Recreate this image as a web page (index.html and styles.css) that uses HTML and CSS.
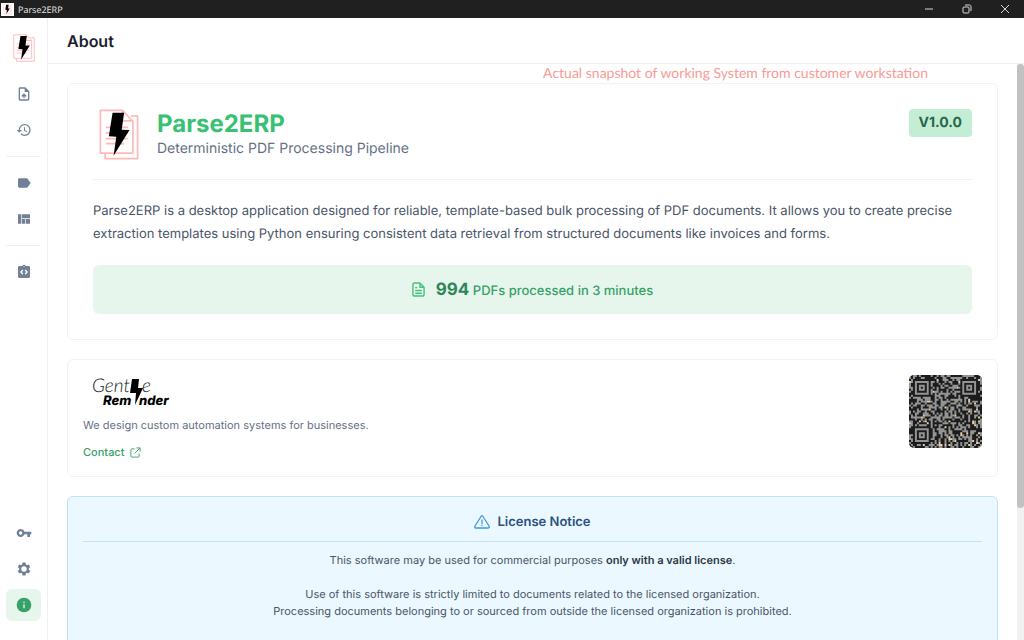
FILE: index.html
```html
<!DOCTYPE html>
<html lang="en">
<head>
    <meta charset="UTF-8">
    <meta name="viewport" content="width=device-width, initial-scale=1.0">
    <title>Parse2ERP</title>
    <link rel="stylesheet" href="styles.css">
</head>
<body>
    <!-- Shared logo artwork -->
    <svg class="sprite" aria-hidden="true">
        <symbol id="logo" viewBox="58 58 118 150">
            <g fill="none" stroke="#ffb9b9" stroke-width="5" stroke-linejoin="round" stroke-linecap="round">
                <path d="M76 190v14h96V78h-18"/>
                <path d="M127 62H62v126h96V94zM127 62v31h31"/>
                <path d="M80 112h62M80 128h62M80 145h62M80 160h50"/>
            </g>
            <path d="M98 69h34l-7 50 23 1-47 76 8-56-22-2z" fill="#000"/>
        </symbol>
    </svg>

    <header class="titlebar">
        <span class="titlebar-icon"><svg><use href="#logo"/></svg></span>
        <span class="titlebar-name">Parse2ERP</span>
        <div class="window-controls">
            <button type="button" aria-label="Minimize">
                <svg viewBox="0 0 10 10"><path d="M1 5h8"/></svg>
            </button>
            <button type="button" aria-label="Restore">
                <svg viewBox="0 0 10 10"><rect x="1" y="3" width="6" height="6" rx="1"/><path d="M3 1h4.500q1.500 0 1.500 1.500V7"/></svg>
            </button>
            <button type="button" aria-label="Close">
                <svg viewBox="0 0 10 10"><path d="M1 1l8 8M9 1l-8 8"/></svg>
            </button>
        </div>
    </header>

    <div class="app">
        <nav class="sidebar">
            <svg class="sidebar-logo"><use href="#logo"/></svg>
            <button type="button" class="nav-btn" aria-label="Upload file">
                <svg viewBox="0 0 24 24"><path d="M14 2H6c-1.100 0-1.990.9-1.990 2L4 20c0 1.100.89 2 1.990 2H18c1.100 0 2-.9 2-2V8l-6-6zm4 18H6V4h7v5h5v11zM8 15l1.400 1.400 1.600-1.600V18h2v-3.200l1.600 1.600L16 15l-4-4z"/></svg>
            </button>
            <button type="button" class="nav-btn" aria-label="History">
                <svg viewBox="0 0 24 24"><path d="M13 3a9 9 0 0 0-9 9H1l3.890 3.890.07.14L9 12H6c0-3.870 3.130-7 7-7s7 3.130 7 7-3.130 7-7 7c-1.930 0-3.680-.79-4.940-2.060l-1.420 1.420A8.950 8.950 0 0 0 13 21a9 9 0 0 0 0-18zm-1 5v5l4.280 2.540.72-1.210-3.500-2.080V8H12z"/></svg>
            </button>
            <hr>
            <button type="button" class="nav-btn" aria-label="Labels">
                <svg viewBox="0 0 24 24"><path d="M17.630 5.840C17.270 5.330 16.670 5 16 5H5C3.900 5 3 5.900 3 7v10c0 1.100.9 2 2 2h11c.67 0 1.270-.33 1.630-.84L22 12z"/></svg>
            </button>
            <button type="button" class="nav-btn" aria-label="Templates">
                <svg viewBox="0 0 24 24"><path d="M3 5h5v14H3zM9 5h12v6H9zM9 12h5v7H9zM15 12h6v7h-6z"/></svg>
            </button>
            <hr>
            <button type="button" class="nav-btn" aria-label="Scripts">
                <svg viewBox="0 0 24 24"><path fill-rule="evenodd" d="M19 3h-4.180a3 3 0 0 0-5.640 0H5a2 2 0 0 0-2 2v14a2 2 0 0 0 2 2h14a2 2 0 0 0 2-2V5a2 2 0 0 0-2-2zM11 14.200l-1.400 1.400L6 12l3.600-3.600L11 9.800 8.800 12zM12 4.300a.8.8 0 1 1 0-1.600.8.8 0 0 1 0 1.600zm2.400 11.300L13 14.200l2.200-2.200L13 9.800l1.400-1.400L18 12z"/></svg>
            </button>
            <div class="nav-bottom">
                <button type="button" class="nav-btn" aria-label="License key">
                    <svg viewBox="0 0 24 24"><path d="M12.650 10C11.830 7.670 9.610 6 7 6c-3.310 0-6 2.690-6 6s2.690 6 6 6c2.610 0 4.830-1.670 5.650-4H17v4h4v-4h2v-4H12.650zM7 14.500a2.500 2.500 0 1 1 0-5 2.500 2.500 0 0 1 0 5z"/></svg>
                </button>
                <button type="button" class="nav-btn" aria-label="Settings">
                    <svg viewBox="0 0 24 24"><path fill-rule="evenodd" d="M19.140 12.940c.04-.3.06-.61.06-.94 0-.32-.02-.64-.07-.94l2.030-1.580c.18-.14.23-.41.12-.61l-1.920-3.320c-.12-.22-.37-.29-.59-.22l-2.390.96c-.5-.38-1.030-.7-1.620-.94l-.36-2.540c-.04-.24-.24-.41-.48-.41h-3.840c-.24 0-.43.17-.47.41l-.36 2.540c-.59.24-1.130.57-1.620.94l-2.390-.96c-.22-.08-.47 0-.59.22L2.740 8.870c-.12.21-.08.47.12.61l2.030 1.580c-.05.3-.09.63-.09.94s.02.64.07.94l-2.030 1.580c-.18.14-.23.41-.12.61l1.920 3.320c.12.22.37.29.59.22l2.390-.96c.5.38 1.030.7 1.620.94l.36 2.540c.05.24.24.41.48.41h3.840c.24 0 .44-.17.47-.41l.36-2.540c.59-.24 1.130-.56 1.620-.94l2.390.96c.22.08.47 0 .59-.22l1.920-3.320c.12-.22.07-.47-.12-.61zM12 16a4 4 0 1 1 0-8 4 4 0 0 1 0 8z"/></svg>
                </button>
                <button type="button" class="nav-btn active" aria-label="About">
                    <svg viewBox="0 0 24 24"><path d="M12 1a11 11 0 1 0 0 22 11 11 0 0 0 0-22zm1 16h-2v-6h2zm0-8h-2V7h2z"/></svg>
                </button>
            </div>
        </nav>

        <div class="page">
            <div class="page-header">
                <h1>About</h1>
                <span class="snapshot-note">Actual snapshot of working System from customer workstation</span>
            </div>

            <div class="scroll-area">
                <main class="content">
                    <section class="card about-card">
                        <div class="about-header">
                            <svg class="about-logo"><use href="#logo"/></svg>
                            <div class="about-title">
                                <h2>Parse2ERP</h2>
                                <p>Deterministic PDF Processing Pipeline</p>
                            </div>
                            <span class="version">V1.0.0</span>
                        </div>
                        <p class="about-text">Parse2ERP is a desktop application designed for reliable, template-based bulk processing of PDF documents. It allows you to create precise extraction templates using Python ensuring consistent data retrieval from structured documents like invoices and forms.</p>
                        <div class="stats">
                            <svg viewBox="0 0 14 16" fill="none" stroke="currentColor" stroke-width="1.500" stroke-linejoin="round" stroke-linecap="round"><path d="M8.500 1H3Q1 1 1 3v10q0 2 2 2h8q2 0 2-2V5.500L8.500 1v4.500H13M4 6h1M4 9h6M4 12h6"/></svg>
                            <p><strong>994</strong> PDFs processed in 3 minutes</p>
                        </div>
                    </section>

                    <section class="card company-card">
                        <div>
                            <svg class="company-logo" viewBox="0 0 90 36" role="img" aria-label="Gentle Reminder">
                                <text class="logo-light" x="9" y="17">Gent</text>
                                <text class="logo-light" x="59" y="17">e</text>
                                <text class="logo-bold" x="20" y="30">Rem</text>
                                <text class="logo-bold" x="56" y="30">nder</text>
                                <path d="M49 4h7l-1 9h5l-8 17 1-12h-6z"/>
                            </svg>
                            <p>We design custom automation systems for businesses.</p>
                            <a href="#contact">Contact
                                <svg viewBox="0 0 12 12" fill="none" stroke="currentColor"><path d="M5 2H2Q1 2 1 3v7q0 1 1 1h7q1 0 1-1V7M7 1h4v4M11 1L5 7"/></svg>
                            </a>
                        </div>
                        <svg class="qr" id="qr" viewBox="0 0 37 37" role="img" aria-label="QR code"></svg>
                    </section>

                    <section class="card license-card">
                        <h3>
                            <svg viewBox="0 0 16 14" fill="none" stroke="#4299e1" stroke-width="1.300" stroke-linejoin="round" stroke-linecap="round"><path d="M7 1.500Q8 0 9 1.500l6 9.500q.8 2-1 2H2q-1.800 0-1-2zM8 5v3.500M8 10.500v.2"/></svg>
                            License Notice
                        </h3>
                        <p>This software may be used for commercial purposes <strong>only with a valid license</strong>.</p>
                        <p>Use of this software is strictly limited to documents related to the licensed organization.<br>Processing documents belonging to or sourced from outside the licensed organization is prohibited.</p>
                        <p>Unauthorized use or distribution may result in suspension of the license and legal action.</p>
                    </section>
                </main>
                <div class="scrollbar"><div class="scrollbar-thumb"></div></div>
            </div>
        </div>
    </div>

    <script>
        // Draw the QR code module by module
        const size = 37;
        const qr = document.getElementById('qr');
        let seed = 20;
        let light = '';
        let warm = '';

        function random() {
            seed = (seed * 16807) % 2147483647;
            return seed / 2147483647;
        }

        // Finder squares sit in three of the corners
        function finder(x, y) {
            const corners = [[3, 3], [27, 3], [3, 27]];
            for (const [cx, cy] of corners) {
                const dx = x - cx;
                const dy = y - cy;
                if (dx >= -1 && dx < 8 && dy >= -1 && dy < 8) {
                    const ring = Math.max(Math.abs(dx - 3), Math.abs(dy - 3));
                    return ring === 3 || ring === 1 ? 'light' : 'dark';
                }
            }
            return '';
        }

        for (let y = 0; y < size; y++) {
            for (let x = 0; x < size; x++) {
                const spot = finder(x, y);
                const value = random();
                const cell = 'M' + x + ' ' + y + 'h1v1h-1z';
                if (spot === 'light' || (!spot && value < 0.45)) {
                    light += cell;
                } else if (!spot && value > 0.96) {
                    warm += cell;
                }
            }
        }

        qr.innerHTML = '<path class="qr-light" d="' + light + '"/>' +
            '<path class="qr-warm" d="' + warm + '"/>';
    </script>
</body>
</html>
```
FILE: styles.css
```css
* {
    box-sizing: border-box;
}
body {
    font-family: Inter, "Liberation Sans", sans-serif;
    background-color: #fff;
    color: #4a5568;
    margin: 0;
    height: 100vh;
    display: flex;
    flex-direction: column;
    overflow: hidden;
    text-rendering: geometricPrecision;
}
h1, h2, h3, p {
    margin: 0;
}
svg {
    display: block;
}
button {
    border: none;
    background: none;
    padding: 0;
    cursor: pointer;
}
.sprite {
    position: absolute;
    width: 0;
    height: 0;
}

/* Window title bar */
.titlebar {
    display: flex;
    align-items: center;
    height: 18px;
    flex-shrink: 0;
    background-color: #202020;
    color: #e8e8e8;
    padding-left: 1px;
}
.titlebar-icon {
    background-color: #fff;
    padding: 1px 2px;
}
.titlebar-icon svg {
    width: 9px;
    height: 11px;
}
.titlebar-name {
    font-family: "Open Sans", sans-serif;
    font-size: 9px;
    margin-left: 4px;
}
.window-controls {
    display: flex;
    margin-left: auto;
}
.window-controls button {
    width: 38px;
    height: 18px;
    display: flex;
    align-items: center;
    justify-content: center;
}
.window-controls svg {
    width: 10px;
    height: 10px;
    fill: none;
    stroke: #d8d8d8;
}

.app {
    display: flex;
    flex: 1;
    min-height: 0;
}

/* Sidebar */
.sidebar {
    display: flex;
    flex-direction: column;
    align-items: center;
    gap: 4px;
    width: 48px;
    flex-shrink: 0;
    padding: 16px 6px 19px;
    border-right: 1px solid #edf0f5;
}
.sidebar-logo {
    width: 22px;
    height: 28px;
    margin-bottom: 12px;
}
.sidebar hr {
    width: 100%;
    height: 1px;
    border: none;
    background-color: #edf0f5;
    margin: 6px 0;
}
.nav-btn {
    display: flex;
    align-items: center;
    justify-content: center;
    width: 35px;
    height: 32px;
    flex-shrink: 0;
    border-radius: 6px;
    color: #718096;
}
.nav-btn svg {
    width: 16px;
    height: 16px;
    fill: currentColor;
}
.nav-btn.active {
    background-color: #e6f6ed;
    color: #38a169;
}
.nav-bottom {
    display: flex;
    flex-direction: column;
    gap: 4px;
    margin-top: auto;
}

/* Page */
.page {
    display: flex;
    flex-direction: column;
    flex: 1;
    min-width: 0;
}
.page-header {
    position: relative;
    display: flex;
    align-items: center;
    height: 46px;
    flex-shrink: 0;
    padding: 0 19px;
    border-bottom: 1px solid #edf0f7;
}
.page-header h1 {
    font-size: 16px;
    font-weight: 600;
    color: #1a202c;
}
.snapshot-note {
    position: absolute;
    top: 46px;
    right: 96px;
    font-family: Lato, sans-serif;
    font-size: 14px;
    line-height: 18px;
    color: #fa9a94;
}
.scroll-area {
    display: flex;
    flex: 1;
    min-height: 0;
}
.content {
    display: flex;
    flex-direction: column;
    gap: 19px;
    flex: 1;
    min-width: 0;
    overflow-y: auto;
    scrollbar-width: none;
    padding: 19px;
}
.scrollbar {
    width: 7px;
    flex-shrink: 0;
    background-color: #f1f1f1;
}
.scrollbar-thumb {
    height: 77%;
    border-radius: 4px;
    background-color: #c1c1c1;
}
.card {
    flex-shrink: 0;
    border: 1px solid #f0f2f7;
    border-radius: 6px;
}

/* About */
.about-card {
    padding: 25px;
}
.about-header {
    display: flex;
    align-items: flex-start;
    padding: 0 0 19px 6px;
    border-bottom: 1px solid #f0f2f5;
}
.about-logo {
    width: 40px;
    height: 51px;
}
.about-title {
    margin-left: 18px;
}
.about-title h2 {
    font-size: 24px;
    font-weight: 700;
    line-height: 30px;
    color: #38c172;
}
.about-title p {
    font-size: 14px;
    line-height: 20px;
    color: #667085;
}
.version {
    margin-left: auto;
    padding: 0 10px;
    border-radius: 4px;
    background-color: #c3edd5;
    color: #276749;
    font-size: 14px;
    font-weight: 700;
    line-height: 28px;
}
.about-text {
    margin: 20px 0 19px;
    font-size: 13px;
    line-height: 23px;
}
.stats {
    display: flex;
    align-items: center;
    justify-content: center;
    gap: 11px;
    height: 49px;
    border-radius: 6px;
    background-color: #e6f6ec;
    color: #38a169;
    font-size: 13px;
    font-weight: 500;
}
.stats svg {
    width: 13px;
    height: 15px;
    color: #48c07f;
}
.stats strong {
    font-size: 17px;
    font-weight: 700;
    color: #2f855a;
}

/* Company */
.company-card {
    display: flex;
    justify-content: space-between;
    align-items: flex-start;
    padding: 15px;
}
.company-card p {
    margin: 6px 0 10px;
    font-size: 11px;
    line-height: 17px;
    color: #667085;
}
.company-card a {
    display: flex;
    align-items: center;
    gap: 6px;
    width: max-content;
    font-size: 11px;
    font-weight: 500;
    line-height: 17px;
    color: #38a169;
    text-decoration: none;
}
.company-card a svg {
    width: 11px;
    height: 11px;
}
.company-logo {
    width: 90px;
    height: 36px;
}
.logo-light {
    font-family: Lato, sans-serif;
    font-size: 19px;
    font-style: italic;
    font-weight: 300;
    fill: #222;
}
.logo-bold {
    font-size: 13px;
    font-style: italic;
    font-weight: 800;
    fill: #000;
}
.qr {
    width: 73px;
    height: 73px;
    border-radius: 5px;
    background-color: #1c1c1c;
}
.qr-light {
    fill: #949494;
}
.qr-warm {
    fill: #e6cfa6;
}

/* License */
.license-card {
    padding: 15px;
    border-color: #bee3f8;
    background-color: #ebf8ff;
    text-align: center;
}
.license-card h3 {
    display: flex;
    align-items: center;
    justify-content: center;
    gap: 7px;
    padding-bottom: 9px;
    margin-bottom: 10px;
    border-bottom: 1px solid #c6e2f2;
    font-size: 13px;
    font-weight: 600;
    line-height: 20px;
    color: #2c5282;
}
.license-card h3 svg {
    width: 16px;
    height: 14px;
}
.license-card p {
    margin-bottom: 17px;
    font-size: 11px;
    line-height: 17px;
}
.license-card strong {
    font-weight: 600;
    color: #2d3748;
}
```
